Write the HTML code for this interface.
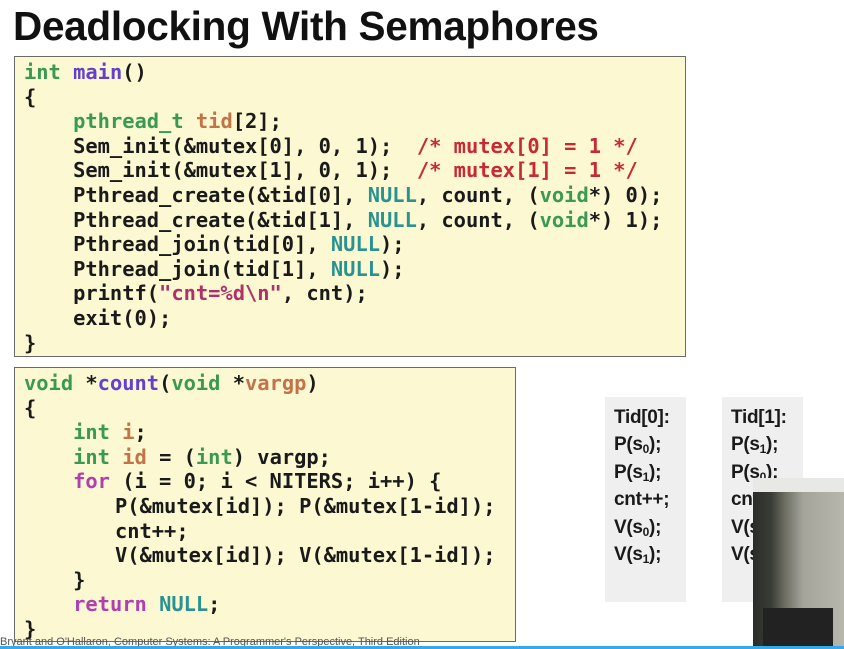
<!DOCTYPE html>
<html><head><meta charset="utf-8"><style>
body{margin:0;width:844px;height:649px;background:#fff;position:relative;overflow:hidden;font-family:"Liberation Sans",sans-serif}
.title{position:absolute;left:13px;top:3px;font-size:40.5px;font-weight:bold;color:#111;letter-spacing:-0.3px}
.box{position:absolute;background:#fbf8d2;border:1.5px solid #6a6a6a;box-sizing:border-box}
pre{position:absolute;margin:0;font-family:"DejaVu Sans Mono","Liberation Mono",monospace;font-weight:bold;font-size:20.4px;line-height:24.6px;color:#1a1a1a}
.g{color:#3a9a52}.p{color:#6640cc}.o{color:#c27448}.t{color:#2a9392}.r{color:#c82a34}.s{color:#b0306a}.m{color:#b040b0}
.panel{position:absolute;background:#efefef;top:397px;height:205px;width:81px}
.tx{position:absolute;font-weight:bold;font-size:19px;line-height:27.4px;color:#1a1a1a;letter-spacing:-0.3px}
sub{font-size:12px;vertical-align:-3px;line-height:0}
.cam{position:absolute;left:753px;top:478px;width:91px;height:171px;background:linear-gradient(90deg,#2a2c28 0,#3a3d36 20%,#6d6e62 35%,#a4a49a 55%,#b8b7ad 100%)}
.foot{position:absolute;left:0;top:636px;font-size:11px;color:#555;white-space:nowrap}
</style></head><body>
<div class="title">Deadlocking With Semaphores</div>
<div class="box" style="left:14px;top:56px;width:672px;height:301px"></div>
<pre style="left:24px;top:60px"><span class="g">int</span> <span class="p">main</span>()
{
    <span class="g">pthread_t</span> <span class="o">tid</span>[2];
    Sem_init(&amp;mutex[0], 0, 1);  <span class="r">/* mutex[0] = 1 */</span>
    Sem_init(&amp;mutex[1], 0, 1);  <span class="r">/* mutex[1] = 1 */</span>
    Pthread_create(&amp;tid[0], <span class="t">NULL</span>, count, (<span class="g">void</span>*) 0);
    Pthread_create(&amp;tid[1], <span class="t">NULL</span>, count, (<span class="g">void</span>*) 1);
    Pthread_join(tid[0], <span class="t">NULL</span>);
    Pthread_join(tid[1], <span class="t">NULL</span>);
    printf(<span class="s">"cnt=%d\n"</span>, cnt);
    exit(0);
}</pre>
<div class="box" style="left:14px;top:367px;width:502px;height:275px"></div>
<pre style="left:24px;top:371px"><span class="g">void</span> *<span class="p">count</span>(<span class="g">void</span> *<span class="o">vargp</span>)
{
    <span class="g">int</span> <span class="o">i</span>;
    <span class="g">int</span> <span class="o">id</span> = (<span class="g">int</span>) vargp;
    <span class="m">for</span> (i = 0; i &lt; NITERS; i++) {
       <span style="margin-left:5px">P(&amp;mutex[id]); P(&amp;mutex[1-id]);</span>
       <span style="margin-left:5px">cnt++;</span>
       <span style="margin-left:5px">V(&amp;mutex[id]); V(&amp;mutex[1-id]);</span>
    }
    <span class="m">return</span> <span class="t">NULL</span>;
}</pre>
<div class="panel" style="left:605px"></div>
<div class="panel" style="left:722px"></div>
<div class="tx" style="left:614px;top:404px">Tid[0]:<br>P(s<sub>0</sub>);<br>P(s<sub>1</sub>);<br>cnt++;<br>V(s<sub>0</sub>);<br>V(s<sub>1</sub>);</div>
<div class="tx" style="left:731px;top:404px">Tid[1]:<br>P(s<sub>1</sub>);<br>P(s<sub>0</sub>);<br>cnt++;<br>V(s<sub>1</sub>);<br>V(s<sub>0</sub>);</div>
<div class="cam"><div style="position:absolute;left:0;top:0;width:91px;height:14px;background:#e8e8e4"></div><div style="position:absolute;left:10px;top:130px;width:70px;height:41px;background:#222"></div></div>
<div class="foot">Bryant and O'Hallaron, Computer Systems: A Programmer's Perspective, Third Edition</div>
<div style="position:absolute;left:0;top:646px;width:844px;height:3px;background:#33aaee"></div>
</body></html>
